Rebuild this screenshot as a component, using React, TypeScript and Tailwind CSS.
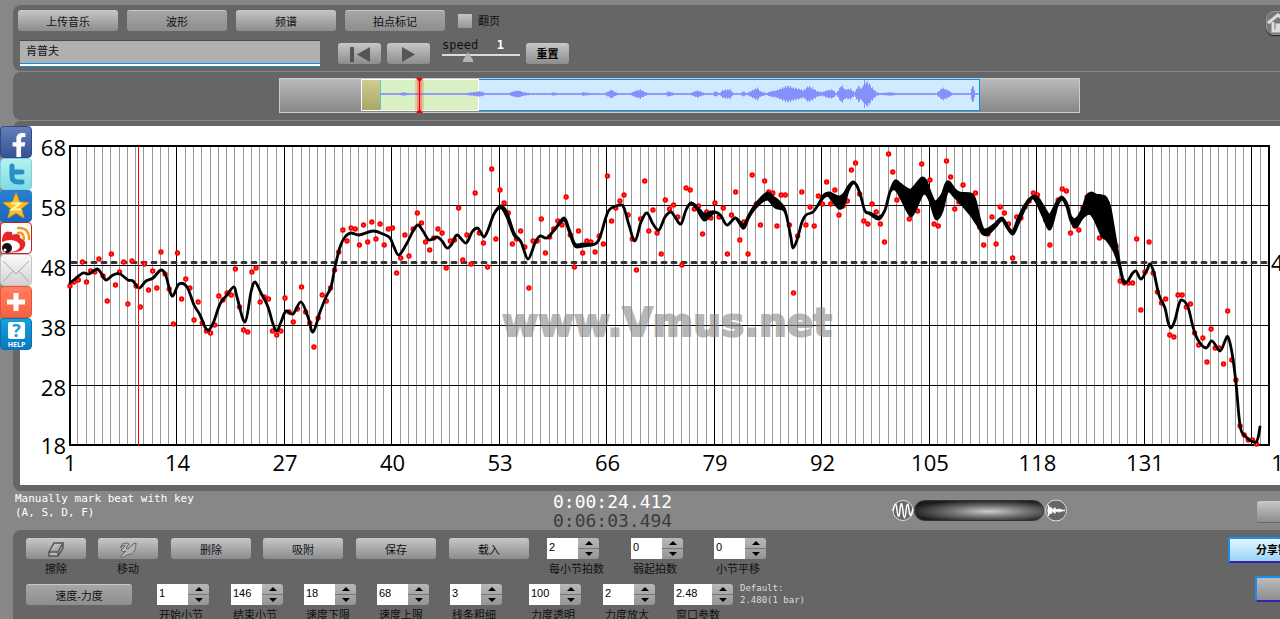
import { useState } from "react";
import type { ReactNode } from "react";
import { FaFacebookF } from "react-icons/fa";
import clsx from "clsx";

const CHART = { left: 70, right: 1269, top: 146, bottom: 445, bars: 146 };
const BAR = (CHART.right - CHART.left) / (CHART.bars - 1);

// one beat per entry, two beats per bar
const BEATS = [
  286, 282, 280, 262, 282, 271, 272, 259, 276, 301,
  254, 285, 272, 262, 304, 261, 286, 307, 264, 290,
  271, 288, 252, 274, 289, 324, 253, 299, 279, 288,
  320, 302, 323, 331, 333, 325, 296, 300, 293, 295,
  269, 307, 330, 332, 272, 268, 302, 297, 299, 331,
  335, 331, 298, 312, 322, 309, 287, 312, 323, 347,
  318, 295, 301, 288, 270, 252, 230, 241, 228, 229,
  245, 225, 242, 222, 239, 224, 245, 229, 228, 273,
  258, 235, 256, 229, 213, 223, 242, 250, 238, 229,
  233, 268, 241, 240, 208, 260, 235, 264, 193, 233,
  243, 267, 169, 239, 190, 203, 213, 244, 239, 231,
  247, 288, 241, 241, 219, 253, 237, 229, 221, 225,
  197, 235, 267, 231, 253, 241, 242, 252, 236, 244,
  176, 221, 208, 201, 195, 215, 239, 270, 219, 181,
  231, 210, 233, 254, 200, 209, 205, 217, 265, 188,
  190, 209, 206, 234, 212, 218, 203, 217, 208, 254,
  215, 192, 240, 222, 254, 175, 204, 225, 181, 192,
  193, 226, 195, 195, 225, 293, 236, 192, 225, 207,
  226, 196, 204, 182, 204, 190, 215, 206, 201, 170,
  163, 194, 221, 224, 204, 212, 224, 242, 154, 172,
  200, 195, 200, 219, 205, 211, 164, 190, 180, 224,
  226, 205, 161, 177, 209, 202, 185, 200, 205, 193,
  227, 245, 234, 217, 244, 207, 213, 224, 258, 217,
  218, 207, 201, 193, 195, 208, 220, 245, 212, 200,
  189, 191, 233, 226, 230, 208, 197, 200, 205, 238,
  205, 215, 230, 246, 281, 283, 283, 283, 239, 310,
  272, 242, 273, 292, 303, 299, 335, 337, 295, 295,
  307, 304, 333, 345, 338, 362, 329, 348, 348, 364,
  311, 360, 380, 426, 435, 440, 440, 444,
];

// x, upper edge, lower edge (omitted where the band is a plain line)
const BAND: number[][] = [
  [70, 283], [75, 279], [83, 273], [89, 274], [97, 269], [101, 273], [106, 280], [113, 275], [120, 274],
  [128, 280], [133, 281], [139, 288], [146, 281], [153, 278], [161, 270], [166, 276], [172, 296], [179, 284],
  [187, 287], [194, 305], [200, 315], [205, 327], [209, 330], [214, 321], [220, 304], [227, 295], [234, 287],
  [237, 297], [245, 322], [251, 292], [255, 282], [261, 293], [268, 307], [273, 324], [277, 331], [281, 322],
  [286, 311], [293, 314], [301, 302], [308, 317], [313, 332], [320, 312], [326, 297], [331, 287], [335, 267],
  [340, 247], [345, 237], [351, 233], [359, 235], [373, 231], [383, 234], [390, 238], [394, 247], [399, 255],
  [407, 243], [413, 231], [418, 225], [423, 231], [429, 240], [437, 237], [442, 241], [447, 248], [452, 244],
  [457, 235], [466, 243], [472, 232], [477, 228], [480, 231], [484, 237], [488, 230], [494, 214], [501, 206, 208],
  [507, 213, 217], [514, 233, 235], [521, 242], [528, 259], [535, 243], [540, 236], [547, 238], [555, 229],
  [564, 218, 220], [569, 229, 231], [575, 244, 246], [583, 244, 246], [595, 244], [600, 237], [606, 217],
  [610, 209], [620, 205], [624, 208], [629, 225], [635, 241], [641, 222], [647, 213], [653, 224], [659, 230],
  [665, 217], [671, 212], [675, 217], [681, 224], [686, 210], [691, 203], [697, 207, 209], [704, 214, 220],
  [711, 212, 215], [715, 212], [721, 216], [727, 225], [735, 218], [740, 222, 224], [744, 225, 228],
  [749, 215, 217], [756, 204, 207], [767, 193, 199], [774, 198, 206], [777, 200, 208], [784, 208, 210],
  [787, 218], [791, 238], [793, 248], [797, 240], [802, 222], [806, 215], [813, 212], [818, 205],
  [824, 195, 197], [829, 193, 196], [839, 197, 208], [844, 194, 204], [848, 187, 191], [853, 182, 183],
  [857, 186], [861, 197], [865, 211], [870, 213, 214], [879, 217, 219], [885, 210], [890, 192],
  [895, 181, 189], [900, 184, 196], [907, 189, 210], [911, 190, 216], [915, 186, 210], [922, 178, 195],
  [926, 181, 194], [930, 192, 201], [934, 201, 214], [937, 201, 219], [942, 195, 211], [946, 184, 195],
  [949, 182, 191], [955, 190, 197], [960, 193, 202], [971, 194, 215], [975, 200, 221], [979, 217, 227],
  [983, 229, 234], [988, 229, 234], [995, 224, 227], [1002, 218, 220], [1008, 227, 229], [1013, 231, 234],
  [1018, 219, 224], [1025, 205, 208], [1032, 197, 198], [1037, 197, 203], [1043, 206, 216], [1049, 215, 229],
  [1053, 210, 221], [1057, 202, 206], [1062, 197, 199], [1067, 204, 207], [1071, 217, 221], [1076, 219, 227],
  [1082, 210, 218], [1087, 196, 214], [1091, 193, 214], [1096, 195, 222], [1102, 196, 236], [1106, 198, 239],
  [1110, 208, 244], [1115, 237, 253], [1120, 266, 268], [1123, 279, 281], [1127, 282], [1132, 274], [1136, 271],
  [1141, 279], [1147, 270], [1150, 264], [1154, 273], [1159, 295], [1165, 308], [1168, 322], [1171, 328],
  [1175, 320], [1179, 304], [1182, 300], [1188, 307], [1193, 327], [1198, 340], [1206, 348], [1212, 341],
  [1220, 351], [1225, 341], [1228, 337], [1232, 353], [1236, 383], [1240, 425], [1245, 436], [1256, 442],
  [1260, 427],
];

// overview loudness: x, amplitude
const LOUDNESS: number[][] = [
  [380, 1], [399, 1], [403, 2], [408, 1], [465, 1], [472, 2], [480, 3], [485, 1], [508, 1], [513, 3], [518, 4],
  [523, 2], [530, 1], [550, 1], [553, 2], [557, 1], [580, 1], [583, 2], [590, 1], [604, 1], [608, 3], [611, 5],
  [615, 2], [618, 1], [630, 1], [636, 4], [640, 5], [645, 2], [648, 1], [665, 1], [668, 3], [674, 1], [690, 1],
  [697, 4], [704, 1], [712, 1], [715, 3], [719, 1], [722, 4], [726, 5], [730, 5], [733, 1], [740, 1], [743, 3],
  [746, 1], [750, 3], [757, 7], [760, 3], [766, 1], [770, 3], [776, 4], [782, 7], [788, 9], [793, 7], [798, 6],
  [803, 4], [808, 9], [813, 6], [817, 3], [822, 2], [826, 4], [832, 5], [836, 1], [841, 10], [845, 5], [850, 6],
  [854, 2], [858, 9], [861, 6], [864, 14], [868, 13], [871, 8], [876, 2], [880, 1], [890, 2], [897, 1], [936, 1],
  [942, 7], [948, 4], [952, 1], [970, 1], [972, 11], [975, 1], [979, 1],
];

function curve(pts: number[][]) {
  let d = "";
  for (let i = 0; i < pts.length - 1; i++) {
    const a = pts[Math.max(i - 1, 0)];
    const b = pts[i];
    const c = pts[i + 1];
    const e = pts[Math.min(i + 2, pts.length - 1)];
    d += ` C${b[0] + (c[0] - a[0]) / 6} ${b[1] + (c[1] - a[1]) / 6} ${c[0] - (e[0] - b[0]) / 6} ${c[1] - (e[1] - b[1]) / 6} ${c[0]} ${c[1]}`;
  }
  return d;
}

function bandPath() {
  const upper = BAND.map((p) => [p[0], p[1]]);
  const lower = BAND.map((p) => [p[0], p[2] ?? p[1]]).reverse();
  return `M${upper[0].join(" ")}${curve(upper)} L${lower[0].join(" ")}${curve(lower)} Z`;
}

function loudnessPath() {
  let d = "";
  for (let k = 0; k < LOUDNESS.length - 1; k++) {
    const [x0, a0] = LOUDNESS[k];
    const [x1, a1] = LOUDNESS[k + 1];
    for (let x = x0; x < x1; x++) {
      const amp = a0 + ((a1 - a0) * (x - x0)) / (x1 - x0);
      const h = Math.max(0.6, amp * (0.85 + 0.15 * Math.sin(x * 2.3)));
      d += `M${x + 0.5} ${94 - h}V${94 + h}`;
    }
  }
  return d;
}

function TempoChart() {
  const bars = Array.from({ length: CHART.bars }, (_, i) => i);
  return (
    <svg viewBox="20 126 1320 359" className="block w-full bg-white" role="img" aria-label="速度-力度">
      {bars.map((i) => {
        const x = Math.round(CHART.left + i * BAR) - 0.5;
        return (
          <line key={i} x1={x} x2={x} y1={CHART.top} y2={CHART.bottom} stroke={i % 13 ? "#999" : "#000"} />
        );
      })}
      {[205.5, 265.5, 325.5, 385.5].map((y) => (
        <line key={y} x1={CHART.left} x2={CHART.right} y1={y} y2={y} stroke="#000" />
      ))}
      <rect x="70" y="146" width="1199" height="299" fill="none" stroke="#000" strokeWidth="2" />
      <line x1="72" x2="1268" y1="262.5" y2="262.5" stroke="#333" strokeWidth="3" strokeDasharray="4 6" strokeLinecap="round" />
      <g fill="#fff" stroke="#f00" strokeWidth="2.2">
        {BEATS.map((y, i) => (
          <circle key={i} cx={CHART.left + (i * BAR) / 2} cy={y} r="1.6" />
        ))}
      </g>
      <path d={bandPath()} stroke="#000" strokeWidth="2.8" strokeLinejoin="round" />
      <text x="502" y="336" fontFamily="DejaVu Sans, sans-serif" fontWeight="700" fontSize="39" fill="#888" stroke="#888" strokeWidth="2" opacity="0.6">
        www.Vmus.net
      </text>
      <line x1="138.5" x2="138.5" y1="146" y2="446" stroke="#f00" />
      <g fontFamily="Open Sans, sans-serif" fontSize="22" fill="#000">
        {[68, 58, 48, 38, 28, 18].map((v, i) => (
          <text key={v} x="66" y={156 + i * 60 - (i === 5 ? 2 : 0)} textAnchor="end">
            {v}
          </text>
        ))}
        {bars.filter((i) => i % 13 === 0 && i < 140).map((i) => (
          <text key={i} x={CHART.left + i * BAR} y="471" textAnchor="middle">
            {i + 1}
          </text>
        ))}
        <text x="1290" y="471" textAnchor="middle">146</text>
        <text x="1271" y="271">48.5</text>
      </g>
    </svg>
  );
}

function Overview() {
  return (
    <svg viewBox="279 78 802 35" className="mx-auto block w-[802px]" role="img" aria-label="波形">
      <defs>
        <linearGradient id="rail" x1="0" x2="0" y1="0" y2="1">
          <stop offset="0" stopColor="#bbb" />
          <stop offset="1" stopColor="#868686" />
        </linearGradient>
        <linearGradient id="khaki" x1="0" x2="0" y1="0" y2="1">
          <stop offset="0" stopColor="#cfcb92" />
          <stop offset="1" stopColor="#aaa768" />
        </linearGradient>
      </defs>
      <rect x="279.5" y="78.5" width="800" height="34" fill="url(#rail)" stroke="#ccc" />
      <rect x="380.5" y="79.5" width="599" height="31" fill="#d0ebff" stroke="#0a90ee" />
      <rect x="361.5" y="79.5" width="117" height="31" fill="#d9f0c2" stroke="#fff" />
      <rect x="362" y="80" width="18" height="30" fill="url(#khaki)" />
      <path d="M380.5 80V110" stroke="#5cc8cf" />
      <path d={loudnessPath()} stroke="#8590fa" />
      <rect x="415" y="79" width="9" height="33" fill="#f33" opacity="0.2" />
      <rect x="417" y="79" width="5" height="33" fill="#f33" opacity="0.35" />
      <path d="M419.5 79V112" stroke="#e00" />
      <path d="M416 78h7l-3.5 4zM416 113h7l-3.5-4z" fill="#e00" />
    </svg>
  );
}

function Button({ children, className, label }: { children?: ReactNode; className: string; label?: string }) {
  return (
    <button
      type="button"
      aria-label={label}
      className={clsx(
        "flex h-[21px] shrink-0 items-center justify-center rounded-[3px] border-t border-[#c8c8c8] bg-linear-to-b pt-0.5 shadow-[0_1px_0_#5f6a70]",
        className,
      )}
    >
      {children}
    </button>
  );
}

const RAISED = "from-[#c4c4c4] to-[#8d8d8d]";
const FLAT = "from-[#a6a6a6] to-[#8e8e8e]";

function Stepper({ id, label, value, wide, className }: { id: string; label: string; value: string; wide?: boolean; className: string }) {
  const [current, setCurrent] = useState(value);
  const step = (by: number) => setCurrent(String(Number(current) + by));

  return (
    <div className={clsx("flex shrink-0 flex-col gap-0.5", className)}>
      <div className="flex h-[21px]">
        <input
          id={id}
          value={current}
          onChange={(e) => setCurrent(e.target.value)}
          className={clsx(
            "h-[21px] bg-white pb-1 pl-0.5 font-['Liberation_Sans',sans-serif] text-[11px] text-black outline-none",
            wide ? "w-[38px]" : "w-[31px]",
          )}
        />
        <div className="flex h-[21px] w-[21px] flex-col divide-y divide-[#777] overflow-hidden rounded-r-[3px] bg-linear-to-b from-[#b8b8b8] to-[#959595]">
          <button type="button" onClick={() => step(1)} aria-label={`${label} +`} className="grid flex-1 place-items-center">
            <svg width="8" height="4"><path d="M4 0L8 4H0z" /></svg>
          </button>
          <button type="button" onClick={() => step(-1)} aria-label={`${label} -`} className="grid flex-1 place-items-center">
            <svg width="8" height="4"><path d="M4 4L8 0H0z" /></svg>
          </button>
        </div>
      </div>
      <label htmlFor={id} className="pl-0.5 leading-4 whitespace-nowrap">{label}</label>
    </div>
  );
}

function ShareBar() {
  const item = "grid h-8 w-8 overflow-hidden rounded-[4px]";
  return (
    <nav className="absolute top-[126px] left-0 flex flex-col">
      <a href="#facebook" aria-label="Facebook" className={clsx(item, "items-end justify-end border border-[#2f4a86] bg-linear-to-b from-[#6580b8] to-[#365294] pr-1")}>
        <FaFacebookF className="h-6 w-4 text-white" />
      </a>
      <a href="#twitter" aria-label="Twitter" className={clsx(item, "border border-[#7fd0d8] bg-linear-to-b from-[#b5f2f0] to-[#7fdce4]")}>
        <svg viewBox="0 0 30 30">
          <path d="M11 7v10q0 6 6 6h4M11 13h10" fill="none" stroke="#2591c4" strokeWidth="5" strokeLinecap="round" />
        </svg>
      </a>
      <a href="#qzone" aria-label="QZone" className={clsx(item, "bg-linear-to-b from-[#2c7fd0] to-[#1b66bb]")}>
        <svg viewBox="0 0 32 32">
          <path d="M16 3l3.500 9 9.500.500-7.500 6 2.500 9.500-8-5-8 5 2.500-9.500-7.500-6 9.500-.500z" fill="#fcc21c" stroke="#e89a10" />
          <path d="M11 13.500h9l-8 6h9" fill="none" stroke="#fff5c0" strokeWidth="2" />
        </svg>
      </a>
      <a href="#weibo" aria-label="Weibo" className={clsx(item, "border border-[#c32020] bg-white")}>
        <svg viewBox="0 0 30 30">
          <path d="M1 18C1 11 5 7 9 9c2-1 3 1 2 3 4-2 9-1 8 3 5 2 7 5 4 10-3 5-14 5-18 4z" fill="#e8242b" />
          <ellipse cx="9" cy="23" rx="10" ry="6" fill="#fff" />
          <circle cx="6" cy="25" r="5" fill="#111" />
          <circle cx="4" cy="27" r="1.500" fill="#fff" />
          <path d="M17 10q6-1 6 6M17 5q11-1 11 11" fill="none" stroke="#f39a1c" strokeWidth="2.500" strokeLinecap="round" />
        </svg>
      </a>
      <a href="#mail" aria-label="Mail" className={clsx(item, "border border-[#c4c4c4] bg-linear-to-b from-[#fafafa] to-[#d2d2d2]")}>
        <svg viewBox="0 0 30 30">
          <path d="M2 6l13 13L28 6M2 27l10-11M28 27L18 16" fill="none" stroke="#aaa" />
        </svg>
      </a>
      <a href="#more" aria-label="More" className={clsx(item, "border border-[#e0573c] bg-linear-to-b from-[#ff7f5f] to-[#f9603f]")}>
        <svg viewBox="0 0 30 30">
          <path d="M15 6v18M6 15h18" stroke="#fff" strokeWidth="5" />
        </svg>
      </a>
      <a href="#help" aria-label="Help" className={clsx(item, "border border-[#0c6fb0] bg-linear-to-b from-[#16a2da] to-[#0a78bd]")}>
        <svg viewBox="0 0 30 30">
          <rect x="7" y="3" width="17" height="17" rx="2" fill="#fff" />
          <text x="15.500" y="18" textAnchor="middle" fontFamily="Open Sans, sans-serif" fontWeight="700" fontSize="18" fill="#18a0d4">?</text>
          <text x="15.500" y="28" textAnchor="middle" fontFamily="Open Sans, sans-serif" fontWeight="700" fontSize="7" fill="#fff">HELP</text>
        </svg>
      </a>
    </nav>
  );
}

export default function App() {
  const [name, setName] = useState("肯普夫");
  const [speed, setSpeed] = useState(31);
  const [flip, setFlip] = useState(false);

  return (
    <div className="relative h-screen overflow-hidden bg-[#878787] font-['Liberation_Sans','Noto_Sans_CJK_SC',sans-serif] text-[11px] text-[#111]">
      <div className="flex min-w-[1360px] flex-col gap-px px-[13px] pt-[5px]">
        <header className="rounded-lg bg-[#666] px-[5px] pt-[5px] pb-1">
          <div className="flex h-[21px] items-center gap-[9px]">
            <Button className={clsx("w-[100px]", RAISED)}>上传音乐</Button>
            <Button className={clsx("w-[100px]", FLAT)}>波形</Button>
            <Button className={clsx("w-[100px]", RAISED)}>频谱</Button>
            <Button className={clsx("w-[100px]", FLAT)}>拍点标记</Button>
            <label className="ml-1 flex items-center gap-1.5">
              <input
                type="checkbox"
                checked={flip}
                onChange={(e) => setFlip(e.target.checked)}
                className="h-3.5 w-3.5 appearance-none bg-linear-to-b from-[#c4c4c4] to-[#969696] checked:from-[#eee] checked:to-[#ccc]"
              />
              <span className="pt-0.5">翻页</span>
            </label>
            <button type="button" aria-label="主页" className="mt-1 mr-[52px] ml-auto grid h-6 w-6 place-items-center rounded-lg border border-[#999] bg-[#777] shadow-[0_1px_1px_#222]">
              <svg width="22" height="22" viewBox="0 0 22 22">
                <path d="M1 11l10-8 10 8M6 10v9h10v-9M10 19v-6h3v6" fill="none" stroke="#ddd" strokeWidth="3" />
              </svg>
            </button>
          </div>
          <div className="mt-2 flex h-7 items-center">
            <div className="ml-0.5 border-b border-[#0a90ee]">
              <input
                aria-label="曲名"
                value={name}
                onChange={(e) => setName(e.target.value)}
                className="block h-[26px] w-[300px] border-t border-b-2 border-t-[#4c4c4c] border-b-white bg-[#b0b0b0] px-1.5 pb-1 shadow-[inset_0_-1px_0_#0a90ee] outline-none"
              />
            </div>
            <Button label="回到开头" className={clsx("ml-[18px] w-[43px]", RAISED)}>
              <svg width="20" height="15" viewBox="0 0 20 15" fill="#555">
                <path d="M0 0h4v15H0zM20 0v15L7 7.500z" />
              </svg>
            </Button>
            <Button label="播放" className={clsx("ml-1.5 w-[43px]", RAISED)}>
              <svg width="13" height="15" viewBox="0 0 13 15" fill="#555">
                <path d="M0 0l13 7.500L0 15z" />
              </svg>
            </Button>
            <div className="mb-1 ml-3 flex w-[78px] flex-col font-['DejaVu_Sans_Mono',monospace] text-xs leading-3">
              <div className="flex justify-between pr-4">
                <label htmlFor="speed">speed</label>
                <output className="font-bold text-white">1</output>
              </div>
              <input
                id="speed"
                type="range"
                value={speed}
                onChange={(e) => setSpeed(Number(e.target.value))}
                className="h-3 w-full appearance-none bg-[linear-gradient(#d8dcdc,#d8dcdc)] bg-[length:100%_2px] bg-[position:0_3px] bg-no-repeat [&::-webkit-slider-thumb]:h-2.5 [&::-webkit-slider-thumb]:w-2.5 [&::-webkit-slider-thumb]:appearance-none [&::-webkit-slider-thumb]:bg-[#b4b4b4] [&::-webkit-slider-thumb]:[clip-path:polygon(50%_0,100%_80%,100%_100%,0_100%,0_80%)]"
              />
            </div>
            <Button className={clsx("ml-1.5 w-[43px] font-bold text-black", RAISED)}>重置</Button>
          </div>
        </header>

        <section className="rounded-lg bg-[#666] pt-1.5 pb-[7px]">
          <Overview />
        </section>

        <section className="rounded-lg bg-[#666] px-[7px] pt-[5px] pb-1.5">
          <TempoChart />
        </section>

        <section className="flex h-[37px] items-start pl-0.5 font-['DejaVu_Sans_Mono',monospace]">
          <p className="w-[538px] text-[11px] leading-3.5 text-white">
            Manually mark beat with key
            <br />
            (A, S, D, F)
          </p>
          <div className="text-lg leading-[19px]">
            <div className="text-white">0:00:24.412</div>
            <div className="text-[#3c3c3c]">0:06:03.494</div>
          </div>
          <div className="mt-[7px] ml-[220px] flex items-center">
            <svg width="22" height="23" viewBox="0 0 22 23">
              <circle cx="11" cy="11.500" r="10" fill="#666" stroke="#ddd" />
              <path d="M1 12c2-9 3-9 4-1s2 9 3 0 2-8 3 1 2 9 3 0 2-9 3-1 2 6 4-1" fill="none" stroke="#fff" strokeWidth="1.500" />
            </svg>
            <div className="h-[21px] w-[130px] rounded-full border border-[#333] bg-[radial-gradient(ellipse_at_58%_55%,#ccc,#777_35%,#1c1c1c_78%)]" />
            <svg width="23" height="23" viewBox="0 0 23 23">
              <circle cx="12" cy="11.500" r="10.500" fill="#666" stroke="#ddd" />
              <path d="M3 11.500h18M4.500 6v11M6 8v7M7.500 8.500v6M9.500 9.500v4M11 8.500v6M13 10v3M15 9.500v4M17 10v3" stroke="#fff" strokeWidth="1.500" />
            </svg>
          </div>
          <Button label="全屏" className={clsx("mt-[9px] ml-auto w-[90px]", RAISED)} />
        </section>

        <footer className="rounded-lg bg-[#666] px-[13px] pt-2">
          <div className="flex h-[46px] items-start">
            <div className="flex w-[60px] flex-col items-center gap-0.5">
              <Button className={clsx("w-full", RAISED)} label="擦除">
                <svg width="18" height="16" viewBox="0 0 18 16" fill="#bbb" stroke="#555" strokeWidth="1.500">
                  <path d="M7 1h9l-5 9H2zM2 10v4h9l5-8V1M11 10v4" />
                </svg>
              </Button>
              <span className="leading-4">擦除</span>
            </div>
            <div className="ml-3 flex w-[60px] flex-col items-center gap-0.5">
              <Button className={clsx("w-full", RAISED)} label="移动">
                <svg width="18" height="17" viewBox="0 0 18 17" fill="#b4b4b4" stroke="#666" strokeLinejoin="round">
                  <path d="M2 6C1 1 8 0 10 2L7 6l2 1 5-5 3-1c0 5-1 9-5 11l-4 1-5 3-1-2 5-5-3 1-2-2 4-4-2-1z" />
                </svg>
              </Button>
              <span className="leading-4">移动</span>
            </div>
            <Button className={clsx("ml-[13px] w-20", RAISED)}>删除</Button>
            <Button className={clsx("ml-3 w-20", RAISED)}>吸附</Button>
            <Button className={clsx("ml-[13px] w-20", RAISED)}>保存</Button>
            <Button className={clsx("ml-[13px] mr-[18px] w-20", RAISED)}>载入</Button>
            <Stepper id="beats" label="每小节拍数" value="2" className="w-[84px]" />
            <Stepper id="pickup" label="弱起拍数" value="0" className="w-[83px]" />
            <Stepper id="shift" label="小节平移" value="0" className="w-[52px]" />
            <button type="button" className="ml-auto mr-1.5 -mt-px h-[26px] w-[100px] rounded-[2px] border-2 border-[#1c8df0] border-b-[#3a20b0] bg-linear-to-b from-[#e4f5ff] to-[#98d4f8] font-bold text-black">
              分享链接
            </button>
          </div>
          <div className="flex h-[46px] items-start">
            <Button className={clsx("mr-[25px] w-[106px]", FLAT)}>速度-力度</Button>
            <Stepper id="from" label="开始小节" value="1" className="w-[74px]" />
            <Stepper id="to" label="结束小节" value="146" className="w-[73px]" />
            <Stepper id="min" label="速度下限" value="18" className="w-[73px]" />
            <Stepper id="max" label="速度上限" value="68" className="w-[73px]" />
            <Stepper id="width" label="线条粗细" value="3" className="w-[79px]" />
            <Stepper id="alpha" label="力度透明" value="100" className="w-[74px]" />
            <Stepper id="gain" label="力度放大" value="2" className="w-[71px]" />
            <Stepper id="window" label="窗口参数" value="2.48" wide className="w-[66px]" />
            <p className="-mt-0.5 font-['DejaVu_Sans_Mono',monospace] text-[9px] leading-3 text-[#ddd]">
              Default:
              <br />
              2.480(1 bar)
            </p>
            <button type="button" aria-label="设置" className="-mt-2 mr-1.5 ml-auto h-[26px] w-[73px] rounded-[3px] border-2 border-[#1c8df0] border-b-[#3a20b0] bg-linear-to-b from-[#bcbcbc] to-[#8d8d8d]" />
          </div>
        </footer>
      </div>
      <ShareBar />
    </div>
  );
}
